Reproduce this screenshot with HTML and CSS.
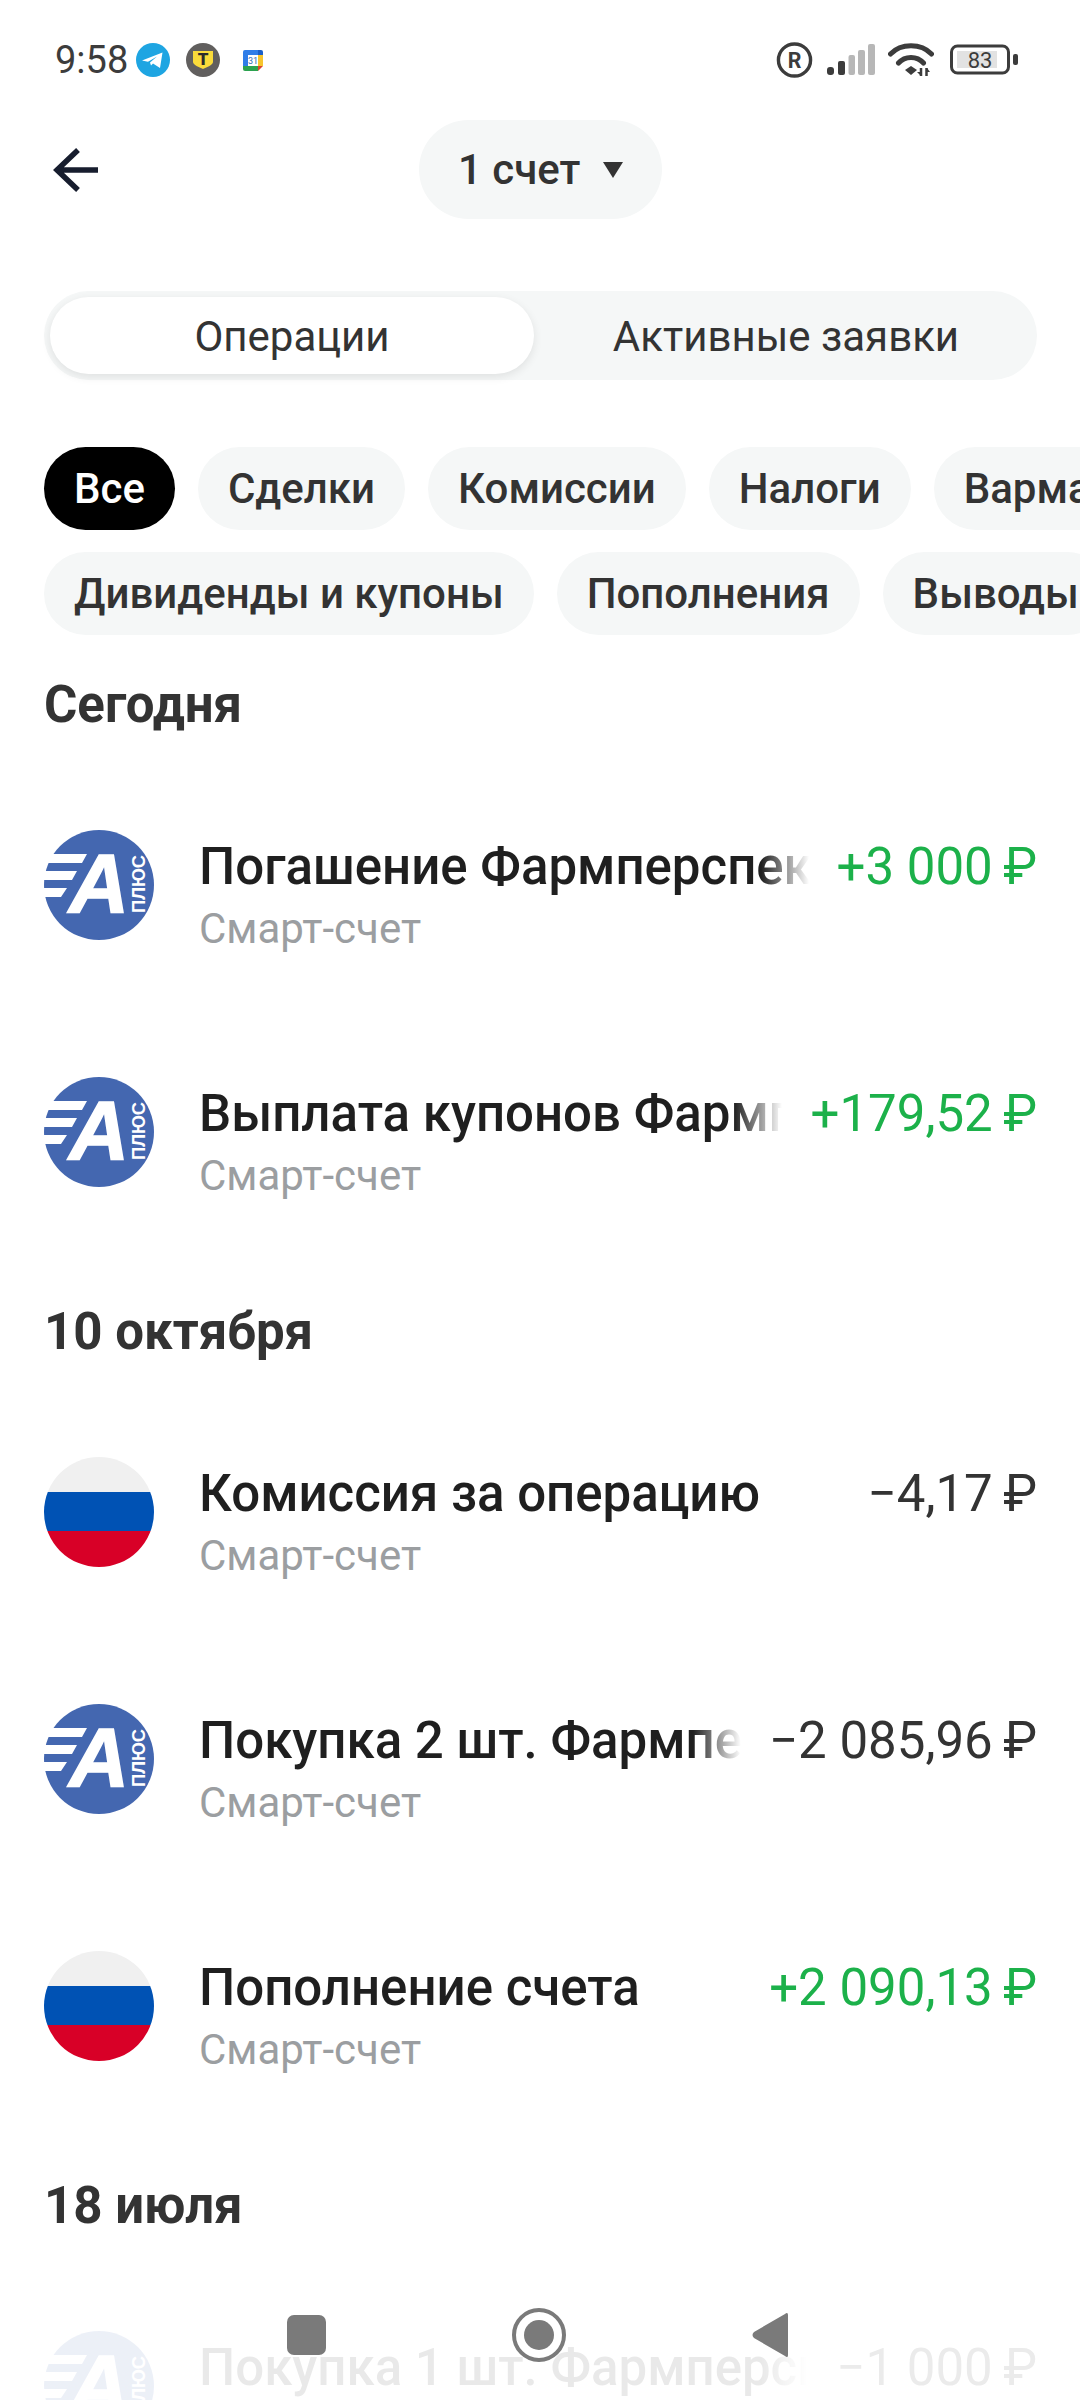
FILE: index.html
```html
<!DOCTYPE html>
<html lang="ru">

<head>
  <meta charset="utf-8">
  <title>Операции</title>
  <meta name="viewport" content="width=device-width, initial-scale=1">
  <link rel="stylesheet" href="styles.css">
</head>

<body>
  <svg class="defs" width="0" height="0">
    <symbol id="logo-aplus" viewBox="0 0 110 110">
      <circle cx="55" cy="55" r="55" fill="#4467b0"></circle>
      <path d="M0 24h43l-5 9H0zM0 41h33l-5 9H0zM0 58h23l-6 9H0z" fill="#fff"></path>
      <text class="logo-a" x="25" y="83" textLength="60" lengthAdjust="spacingAndGlyphs">A</text>
      <text class="logo-plus" transform="translate(101 83) rotate(-90)" textLength="58" lengthAdjust="spacingAndGlyphs">ПЛЮС</text>
    </symbol>
    <symbol id="flag-ru" viewBox="0 0 110 110">
      <clipPath id="flag-clip"><circle cx="55" cy="55" r="55"></circle></clipPath>
      <g clip-path="url(#flag-clip)">
        <rect width="110" height="35" fill="#f0f0f0"></rect>
        <rect y="35" width="110" height="39" fill="#0052b4"></rect>
        <rect y="74" width="110" height="36" fill="#d80027"></rect>
      </g>
    </symbol>
  </svg>

  <div class="page">
    <div class="status">
      <span class="time">9:58</span>
      <svg class="note note-tg" width="34" height="34" viewBox="0 0 34 34">
        <circle cx="17" cy="17" r="17" fill="#1ea5e2"></circle>
        <path d="M6 17.500 26.500 9.500 24 25 17 20.500 15 22.500 14 19.500 21 13.500 12 18.800z" fill="#fff"></path>
      </svg>
      <svg class="note note-t" width="34" height="34" viewBox="0 0 34 34">
        <circle cx="17" cy="17" r="17" fill="#615f5e"></circle>
        <path d="M7 8h20v11c0 3-6 5-10 7C13 24 7 22 7 19z" fill="#fadb3a"></path>
        <text class="note-t-letter" x="17" y="22">T</text>
      </svg>
      <svg class="note note-cal" width="20" height="21" viewBox="0 0 20 21">
        <rect width="20" height="21" rx="2" fill="#fff"></rect>
        <path d="M2 0h13v5H5v11H0V2a2 2 0 0 1 2-2z" fill="#2f7de8"></path>
        <path d="M15 0h3a2 2 0 0 1 2 2v3h-5z" fill="#1a5fc9"></path>
        <path d="M15 5h5v11h-5z" fill="#f7c52d"></path>
        <path d="M0 16h15v5H2a2 2 0 0 1-2-2z" fill="#2ca24f"></path>
        <path d="M15 16h5l-5 5z" fill="#d9432f"></path>
        <text class="note-cal-num" x="10" y="14">31</text>
      </svg>
      <div class="status-right">
        <svg class="st-r" width="37" height="38" viewBox="0 0 38 38">
          <circle cx="19" cy="19" r="16.500" fill="none" stroke="#3c3c3c" stroke-width="3.500"></circle>
          <text class="status-r" x="19" y="27">R</text>
        </svg>
        <svg class="st-signal" width="48" height="32" viewBox="0 0 48 32">
          <rect x="0" y="23" width="7" height="8" rx="3" fill="#3c3c3c"></rect>
          <rect x="11" y="17" width="7" height="14" rx="2" fill="#3c3c3c"></rect>
          <rect x="21.500" y="11" width="6.500" height="20" rx="2" fill="#b7b7b7"></rect>
          <rect x="31" y="6" width="7" height="25" rx="2" fill="#b7b7b7"></rect>
          <rect x="41" y="0" width="7" height="31" rx="2" fill="#b7b7b7"></rect>
        </svg>
        <svg class="st-wifi" width="46" height="34" viewBox="0 0 46 34">
          <path d="M2.500 11C13 0 33 0 43.500 11M10.500 20C17 12.500 29 12.500 35.500 20" fill="none" stroke="#3c3c3c" stroke-width="5" stroke-linecap="round"></path>
          <path d="M17 27l6-4 6 4-6 5z" fill="#3c3c3c"></path>
          <path d="M33 25v8M38.500 25v8" fill="none" stroke="#3c3c3c" stroke-width="2.500"></path>
          <path d="M29 29h4v4zM42 29h-3v-4z" fill="#3c3c3c"></path>
        </svg>
        <svg class="st-battery" width="68" height="32" viewBox="0 0 68 32">
          <rect x="1.500" y="2" width="57" height="27" rx="6" fill="none" stroke="#3c3c3c" stroke-width="3"></rect>
          <rect x="7" y="7" width="40" height="17" fill="#e2e2e2"></rect>
          <rect x="63" y="10" width="5" height="11" rx="2" fill="#3c3c3c"></rect>
          <text class="battery-num" x="30" y="23.500">83</text>
        </svg>
      </div>
    </div>

    <div class="header">
      <svg class="back" width="46" height="46" viewBox="0 0 46 46">
        <path d="M45 23H5M25 3 4 23l21 20" fill="none" stroke="#171d2e" stroke-width="5.500"></path>
      </svg>
      <div class="account">
        <span>1 счет</span>
        <i class="caret"></i>
      </div>
    </div>

    <div class="tabs">
      <div class="tab tab-active">Операции</div>
      <div class="tab tab-second">Активные заявки</div>
    </div>

    <div class="chips">
      <span class="chip chip-active">Все</span>
      <span class="chip">Сделки</span>
      <span class="chip">Комиссии</span>
      <span class="chip">Налоги</span>
      <span class="chip">Вармаржа</span>
    </div>
    <div class="chips chips-second">
      <span class="chip">Дивиденды и купоны</span>
      <span class="chip">Пополнения</span>
      <span class="chip">Выводы</span>
    </div>

    <section class="group group-first">
      <h2 class="group-title">Сегодня</h2>
      <div class="row">
        <svg class="row-icon"><use href="#logo-aplus"></use></svg>
        <div class="row-main">
          <div class="row-title fade">Погашение Фармперспектива</div>
          <div class="row-sub">Смарт-счет</div>
        </div>
        <div class="row-sum plus">+3 000&thinsp;₽</div>
      </div>
      <div class="row">
        <svg class="row-icon"><use href="#logo-aplus"></use></svg>
        <div class="row-main">
          <div class="row-title fade">Выплата купонов Фармперспектива</div>
          <div class="row-sub">Смарт-счет</div>
        </div>
        <div class="row-sum plus">+179,52&thinsp;₽</div>
      </div>
    </section>

    <section class="group">
      <h2 class="group-title">10 октября</h2>
      <div class="row">
        <svg class="row-icon"><use href="#flag-ru"></use></svg>
        <div class="row-main">
          <div class="row-title">Комиссия за операцию</div>
          <div class="row-sub">Смарт-счет</div>
        </div>
        <div class="row-sum">−4,17&thinsp;₽</div>
      </div>
      <div class="row">
        <svg class="row-icon"><use href="#logo-aplus"></use></svg>
        <div class="row-main">
          <div class="row-title fade">Покупка 2 шт. Фармперспектива</div>
          <div class="row-sub">Смарт-счет</div>
        </div>
        <div class="row-sum">−2 085,96&thinsp;₽</div>
      </div>
      <div class="row">
        <svg class="row-icon"><use href="#flag-ru"></use></svg>
        <div class="row-main">
          <div class="row-title">Пополнение счета</div>
          <div class="row-sub">Смарт-счет</div>
        </div>
        <div class="row-sum plus">+2 090,13&thinsp;₽</div>
      </div>
    </section>

    <section class="group">
      <h2 class="group-title">18 июля</h2>
      <div class="row">
        <svg class="row-icon"><use href="#logo-aplus"></use></svg>
        <div class="row-main">
          <div class="row-title fade">Покупка 1 шт. Фармперспектива</div>
          <div class="row-sub">Смарт-счет</div>
        </div>
        <div class="row-sum">−1 000&thinsp;₽</div>
      </div>
    </section>

    <div class="navbar">
      <i class="nav-square"></i>
      <i class="nav-home"></i>
      <svg width="36" height="46" viewBox="0 0 36 46">
        <path d="M33 2c2-2 3-1 3 1v40c0 2-1 3-3 1L2 26c-2-2-2-4 0-6z" fill="#7a7a7a"></path>
      </svg>
    </div>
  </div>
</body>

</html>
```

FILE: styles.css
```css
* {
  padding: 0;
  margin: 0;
  box-sizing: border-box;
}

body {
  background-color: #fff;
  font-family: Roboto, "Noto Sans", sans-serif;
  color: #333;
}

.defs {
  position: absolute;
}

.page {
  position: relative;
  width: 1080px;
  height: 2400px;
  padding-top: 40px;
  overflow: hidden;
  background-color: #fff;
}

/* status bar */
.status {
  display: flex;
  align-items: center;
  height: 40px;
  padding-left: 55px;
  padding-right: 62px;
}

.time {
  font-size: 38px;
  line-height: 40px;
  color: #3c3c3c;
  margin-right: 8px;
}

.note-t {
  margin-left: 16px;
}

.note-cal {
  margin-left: 23px;
}

.note-t-letter {
  font: 900 17px Roboto, sans-serif;
  fill: #2b2b2b;
  text-anchor: middle;
}

.note-cal-num {
  font: 400 9px Roboto, sans-serif;
  fill: #2f6db5;
  text-anchor: middle;
}

.status-right {
  display: flex;
  align-items: center;
  margin-left: auto;
}

.st-signal {
  margin-left: 14px;
}

.st-wifi {
  margin-left: 13px;
}

.st-battery {
  margin-left: 16px;
}

.status-r {
  font: 700 22px Roboto, sans-serif;
  fill: #3c3c3c;
  text-anchor: middle;
}

.battery-num {
  font: 400 22px Roboto, sans-serif;
  fill: #3c3c3c;
  text-anchor: middle;
}

/* header */
.header {
  display: flex;
  align-items: center;
  margin-top: 40px;
  padding-left: 53px;
}

.back {
  margin-right: 320px;
}

.account {
  display: flex;
  align-items: center;
  justify-content: space-between;
  width: 243px;
  height: 99px;
  padding: 0 39px 0 39px;
  border-radius: 50px;
  background-color: #f5f7f7;
  font-size: 42px;
  font-weight: 500;
}

.caret {
  width: 0;
  height: 0;
  border-left: 10px solid transparent;
  border-right: 10px solid transparent;
  border-top: 16px solid #333;
}

/* tabs */
.tabs {
  display: flex;
  height: 89px;
  margin: 72px 43px 0 44px;
  padding: 6px;
  border-radius: 45px;
  background-color: #f5f7f7;
}

.tab {
  flex: 1;
  display: flex;
  align-items: center;
  justify-content: center;
  padding-top: 2px;
  font-size: 42px;
}

.tab-second {
  padding-left: 7px;
}

.tab-active {
  flex: none;
  width: 484px;
  border-radius: 39px;
  background-color: #fff;
  box-shadow: 0 3px 10px rgba(0, 0, 0, 0.09);
}

/* filter chips */
.chips {
  display: flex;
  gap: 23px;
  margin-top: 67px;
  padding-left: 44px;
  overflow: hidden;
}

.chips-second {
  margin-top: 22px;
}

.chip {
  flex: none;
  height: 83px;
  padding: 0 30px;
  border-radius: 42px;
  background-color: #f5f7f7;
  font-size: 42px;
  font-weight: 500;
  line-height: 83px;
}

.chip-active {
  background-color: #000;
  color: #fff;
}

/* operations */
.group {
  margin-top: 47px;
}

.group-first {
  margin-top: 41px;
}

.group-title {
  padding: 0 44px 28px;
  font-size: 51px;
  font-weight: 700;
  line-height: 58px;
  color: #333;
}

.row {
  display: flex;
  align-items: flex-start;
  height: 247px;
  padding: 68px 43px 0 44px;
}

.row-icon {
  flex: none;
  width: 110px;
  height: 110px;
  margin-right: 45px;
}

.logo-a {
  font: italic 700 84px "Liberation Sans", sans-serif;
  fill: #fff;
  stroke: #fff;
  stroke-width: 1.5;
}

.logo-plus {
  font: 700 18px "Liberation Sans", sans-serif;
  fill: #fff;
}

.row-main {
  flex: 1;
  min-width: 0;
  padding-top: 7px;
}

.row-title {
  position: relative;
  overflow: hidden;
  white-space: nowrap;
  font-size: 51px;
  font-weight: 500;
  line-height: 60px;
  color: #1f1f1f;
}

.fade::after {
  content: "";
  position: absolute;
  top: 0;
  right: 0;
  bottom: 0;
  width: 48px;
  background: linear-gradient(to right, rgba(255, 255, 255, 0), #fff);
}

.row-sub {
  margin-top: 4px;
  font-size: 42px;
  line-height: 56px;
  color: #9b9ea1;
}

.row-sum {
  flex: none;
  margin-left: 28px;
  padding-top: 7px;
  font-size: 51px;
  line-height: 60px;
  white-space: nowrap;
  color: #333;
}

.plus {
  color: #1cb14a;
}

/* system navigation, lies over the list */
.navbar {
  position: absolute;
  left: 0;
  right: 0;
  bottom: 0;
  display: flex;
  align-items: center;
  height: 110px;
  padding: 0 0 20px 287px;
  background-color: rgba(255, 255, 255, 0.9);
}

.nav-square {
  width: 39px;
  height: 40px;
  border-radius: 7px;
  background-color: #7a7a7a;
}

.nav-home {
  position: relative;
  width: 54px;
  height: 54px;
  margin: 0 186px;
  border: 4px solid #7a7a7a;
  border-radius: 50%;
}

.nav-home::after {
  content: "";
  position: absolute;
  top: 8px;
  left: 8px;
  width: 30px;
  height: 30px;
  border-radius: 50%;
  background-color: #7a7a7a;
}
```
